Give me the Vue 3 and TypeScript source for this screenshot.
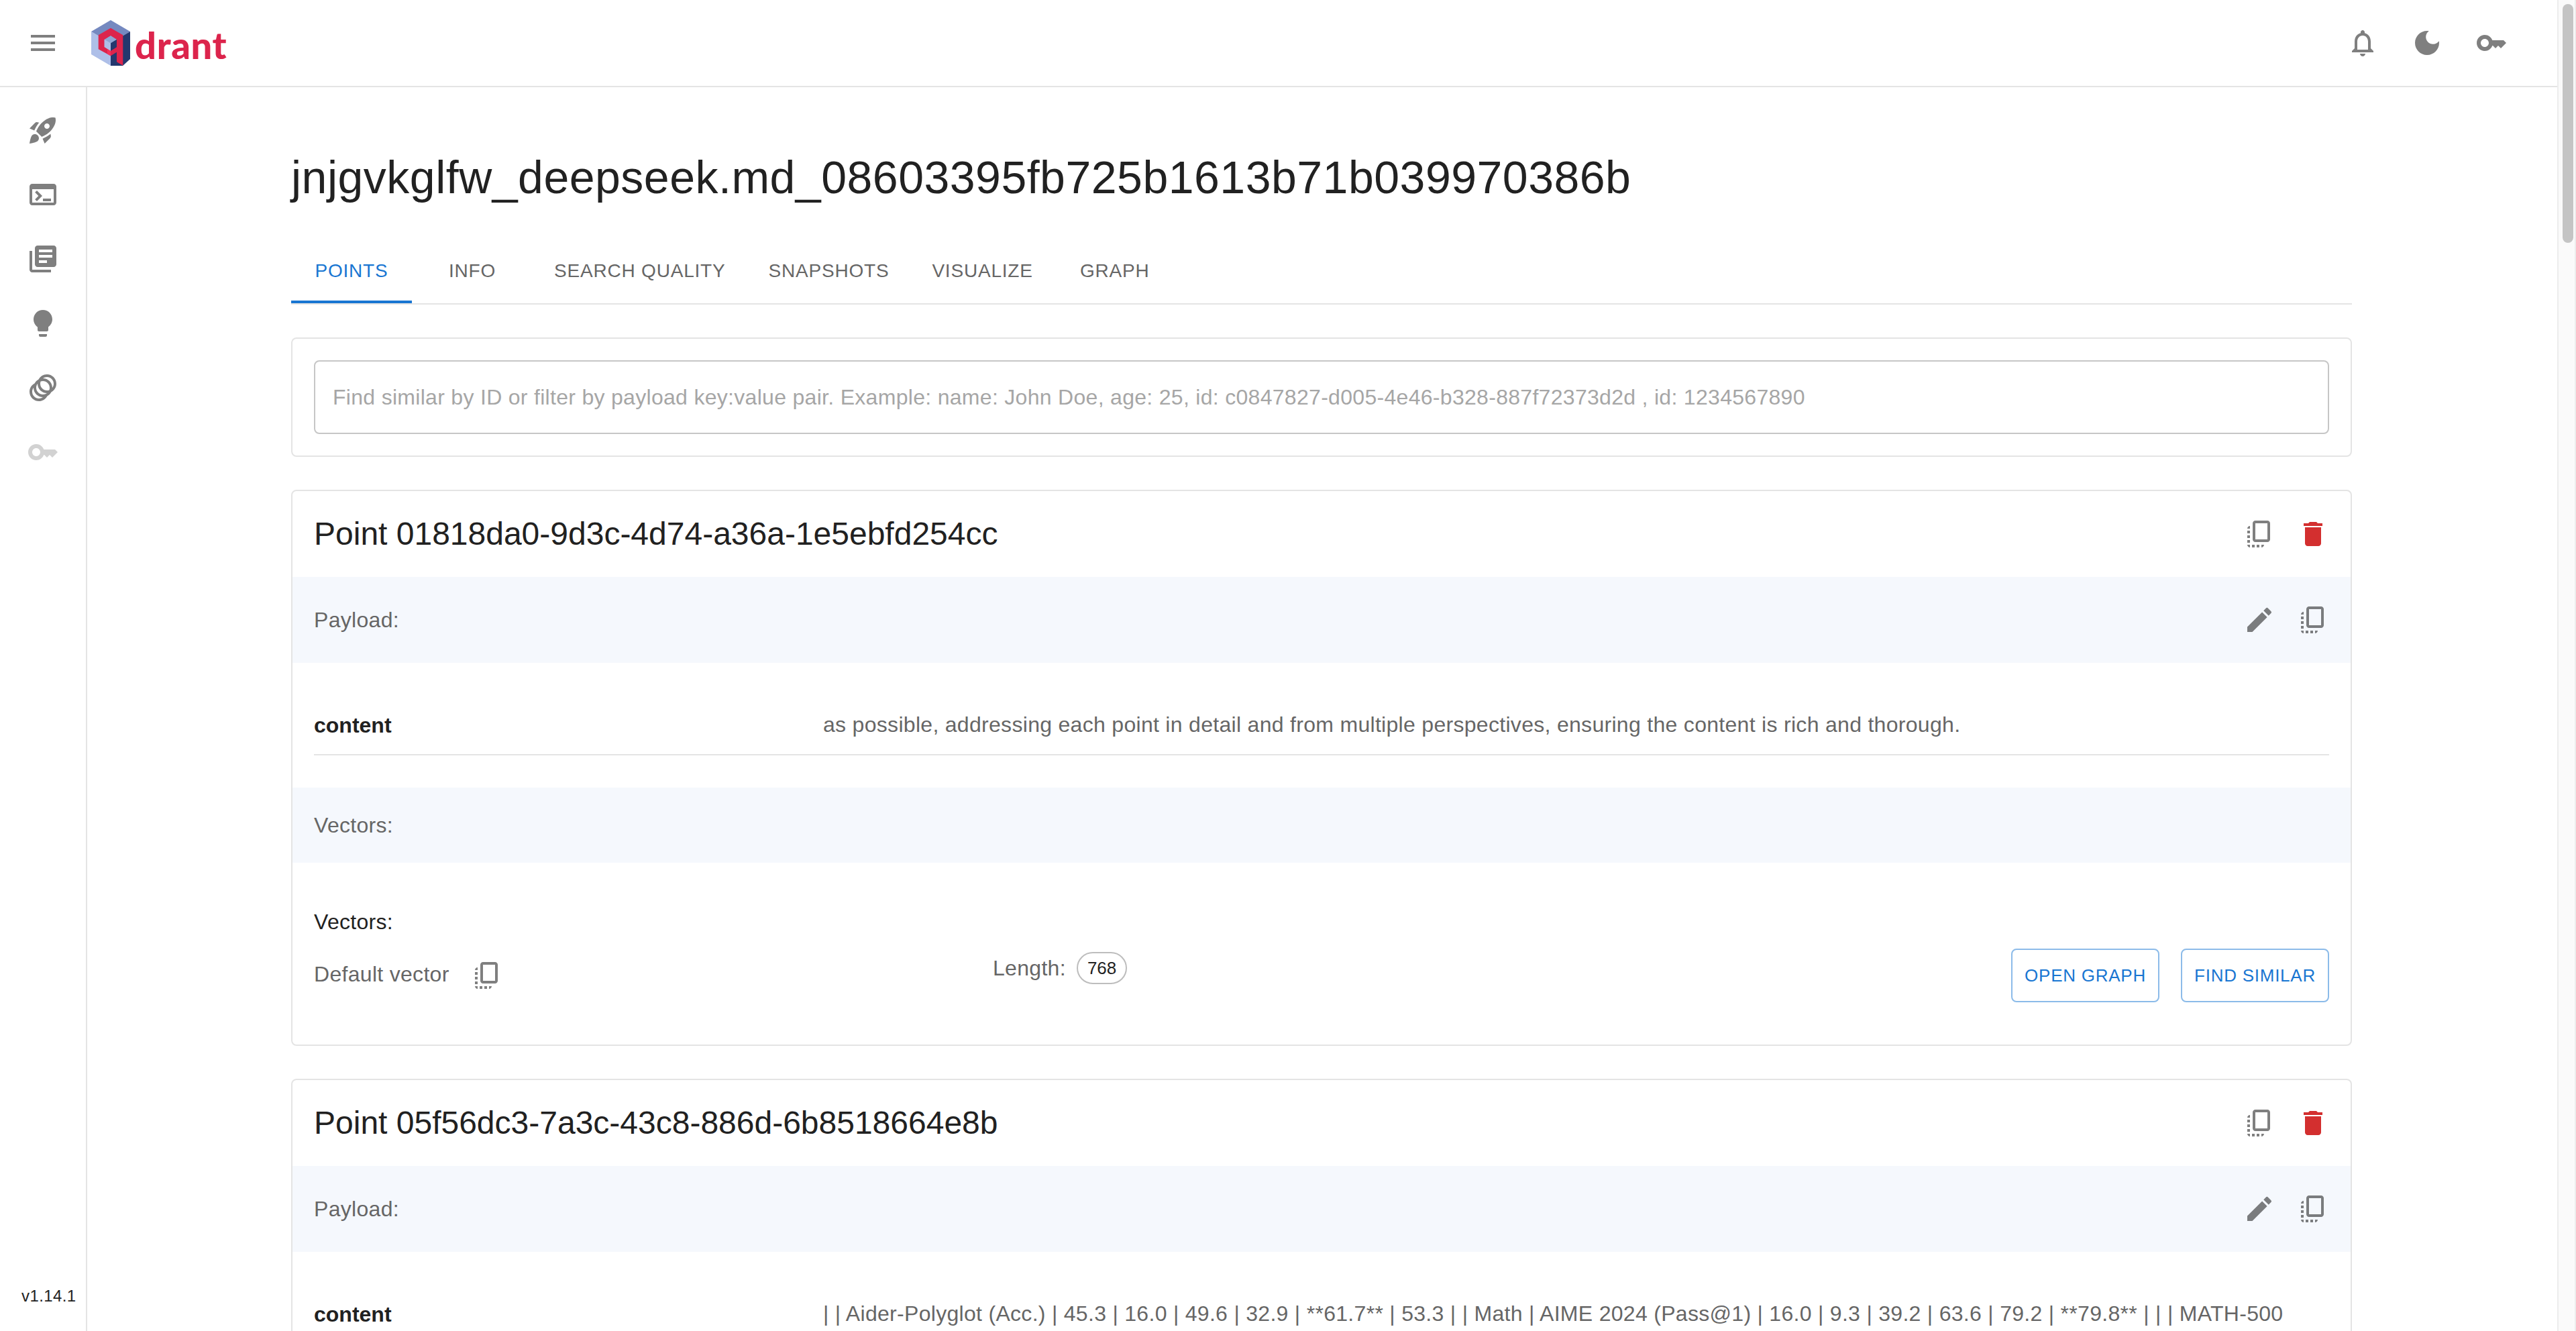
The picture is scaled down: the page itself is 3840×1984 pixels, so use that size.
<script setup lang="ts">
const icons: Record<string, string> = {
  menu: 'M3 18h18v-2H3v2zm0-5h18v-2H3v2zm0-7v2h18V6H3z',
  rocket: 'M9.19 6.35c-2.04 2.29-3.44 5.58-3.57 5.89L2 10.69l4.05-4.05c.47-.47 1.15-.68 1.81-.55l1.33.26zM11.17 17s3.74-1.55 5.89-3.7c5.4-5.4 4.5-9.62 4.21-10.57-.95-.3-5.17-1.19-10.57 4.21C8.55 9.09 7 12.83 7 12.83L11.17 17zm6.48-2.19c-2.29 2.04-5.58 3.44-5.89 3.57L13.31 22l4.05-4.05c.47-.47.68-1.15.55-1.81l-.26-1.33zM9 18c0 .83-.34 1.58-.88 2.12C6.94 21.3 2 22 2 22s.7-4.94 1.88-6.12C4.42 15.34 5.17 15 6 15c1.66 0 3 1.34 3 3zm4-9c0-1.1.9-2 2-2s2 .9 2 2-.9 2-2 2-2-.9-2-2z',
  terminal: 'M20 4H4c-1.1 0-2 .9-2 2v12c0 1.1.9 2 2 2h16c1.1 0 2-.9 2-2V6c0-1.1-.9-2-2-2zm0 14H4V8h16v10zm-2-1h-6v-2h6v2zM7.5 17l-1.41-1.41L8.67 13l-2.59-2.59L7.5 9l4 4-4 4z',
  library: 'M4 6H2v14c0 1.1.9 2 2 2h14v-2H4V6zm16-4H8c-1.1 0-2 .9-2 2v12c0 1.1.9 2 2 2h12c1.1 0 2-.9 2-2V4c0-1.1-.9-2-2-2zm-1 9H9V9h10v2zm-4 4H9v-2h6v2zm4-8H9V5h10v2z',
  bulb: 'M9 21c0 .5.4 1 1 1h4c.6 0 1-.5 1-1v-1H9v1zm3-19C8.1 2 5 5.1 5 9c0 2.4 1.2 4.5 3 5.7V17c0 .5.4 1 1 1h6c.6 0 1-.5 1-1v-2.3c1.8-1.3 3-3.4 3-5.7 0-3.9-3.1-7-7-7z',
  rings: 'M15 2c-2.71 0-5.05 1.54-6.22 3.78-1.28.67-2.34 1.72-3 3C3.54 9.95 2 12.29 2 15c0 3.87 3.13 7 7 7 2.71 0 5.05-1.54 6.22-3.78 1.28-.67 2.34-1.72 3-3C20.46 14.05 22 11.71 22 9c0-3.87-3.13-7-7-7zM9 20c-2.76 0-5-2.24-5-5 0-1.12.37-2.16 1-3 0 3.87 3.13 7 7 7-.84.63-1.88 1-3 1zm3-3c-2.76 0-5-2.24-5-5 0-1.12.37-2.16 1-3 0 3.86 3.13 6.99 7 7-.84.63-1.88 1-3 1zm4.7-3.3c-.53.19-1.1.3-1.7.3-2.76 0-5-2.24-5-5 0-.6.11-1.17.3-1.7.53-.19 1.1-.3 1.7-.3 2.76 0 5 2.24 5 5 0 .6-.11 1.17-.3 1.7zM19 12c0-3.86-3.13-6.99-7-7 .84-.63 1.87-1 3-1 2.76 0 5 2.24 5 5 0 1.12-.37 2.16-1 3z',
  key: 'M21 10h-8.35C11.83 7.67 9.61 6 7 6c-3.31 0-6 2.69-6 6s2.69 6 6 6c2.61 0 4.83-1.67 5.65-4H13l2 2 2-2 2 2 4-4.04L21 10zM7 15c-1.65 0-3-1.35-3-3s1.35-3 3-3 3 1.35 3 3-1.35 3-3 3z',
  bell: 'M12 22c1.1 0 2-.9 2-2h-4c0 1.1.9 2 2 2zm6-6v-5c0-3.07-1.63-5.64-4.5-6.32V4c0-.83-.67-1.5-1.5-1.5s-1.5.67-1.5 1.5v.68C7.64 5.36 6 7.92 6 11v5l-2 2v1h16v-1l-2-2zm-2 1H8v-6c0-2.48 1.51-4.5 4-4.5s4 2.02 4 4.5v6z',
  moon: 'M12 3c-4.97 0-9 4.03-9 9s4.03 9 9 9 9-4.03 9-9c0-.46-.04-.92-.1-1.36-.98 1.37-2.58 2.26-4.4 2.26-2.98 0-5.4-2.42-5.4-5.4 0-1.81.89-3.42 2.26-4.4-.44-.06-.9-.1-1.36-.1z',
  copy: 'M18 2H9c-1.1 0-2 .9-2 2v12c0 1.1.9 2 2 2h9c1.1 0 2-.9 2-2V4c0-1.1-.9-2-2-2zm0 14H9V4h9v12zM3 15v-2h2v2H3zm0-5.5h2v2H3v-2zM10 20h2v2h-2v-2zm-7-1.5v-2h2v2H3zM5 22c-1.1 0-2-.9-2-2h2v2zm3.5 0h-2v-2h2v2zm5 0v-2h2c0 1.1-.9 2-2 2zM5 6v2H3c0-1.1.9-2 2-2z',
  trash: 'M6 19c0 1.1.9 2 2 2h8c1.1 0 2-.9 2-2V7H6v12zM19 4h-3.5l-1-1h-5l-1 1H5v2h14V4z',
  edit: 'M3 17.25V21h3.75L17.81 9.94l-3.75-3.75L3 17.25zM20.71 7.04c.39-.39.39-1.02 0-1.41l-2.34-2.34a.9959.9959 0 0 0-1.41 0l-1.83 1.83 3.75 3.75 1.83-1.83z',
}

const navItems = ['rocket', 'terminal', 'library', 'bulb', 'rings']
const tabs = ['POINTS', 'INFO', 'SEARCH QUALITY', 'SNAPSHOTS', 'VISUALIZE', 'GRAPH']
const points = [
  {
    id: '01818da0-9d3c-4d74-a36a-1e5ebfd254cc',
    content: 'as possible, addressing each point in detail and from multiple perspectives, ensuring the content is rich and thorough.',
    showVectors: true,
  },
  {
    id: '05f56dc3-7a3c-43c8-886d-6b8518664e8b',
    content: '| | Aider-Polyglot (Acc.) | 45.3 | 16.0 | 49.6 | 32.9 | **61.7** | 53.3 | | Math | AIME 2024 (Pass@1) | 16.0 | 9.3 | 39.2 | 63.6 | 79.2 | **79.8** | | | MATH-500',
    showVectors: false,
  },
]
</script>

<template>
  <div class="app">
    <div class="page">
      <header class="topbar">
        <div class="brand">
          <svg class="ic menu" viewBox="0 0 24 24"><path :d="icons.menu" /></svg>
          <div class="logo">
            <svg class="cube" viewBox="0 0 58 68">
              <polygon points="0,17 29,34 29,68 0,51" fill="#aebfe8" />
              <polygon points="0,17 29,0 58,17 29,34" fill="#7589c0" />
              <polygon points="58,17 58,58 47,68 29,68 29,34" fill="#24386e" />
              <path fill="#dc244c" fill-rule="evenodd" d="M29 11.7 47.3 22.3V67.7L38 62.3V47.7L29 53.3 10.7 43.3V22.3ZM29 23.3 19.7 29V40L29 45.7 38 40V29Z" />
              <polygon points="24,43 29,45.7 29,53.3 24,50.6" fill="#f4305a" />
              <polygon points="29,23.3 38,29 29,34.5 19.7,29" fill="#8fa6d4" />
              <polygon points="19.7,29 29,34.5 29,45.7 19.7,40" fill="#aebfe8" />
              <polygon points="38,29 38,40 29,45.7 29,34.5" fill="#24386e" />
            </svg>
            <span class="wordmark">drant</span>
          </div>
        </div>
        <div class="actions">
          <svg v-for="n in ['bell', 'moon', 'key']" :key="n" class="ic" viewBox="0 0 24 24"><path :d="icons[n]" /></svg>
        </div>
      </header>

      <div class="body">
        <aside class="sidebar">
          <div v-for="n in navItems" :key="n" class="nav-item">
            <svg class="ic" viewBox="0 0 24 24"><path :d="icons[n]" /></svg>
          </div>
          <div class="nav-item">
            <svg class="ic disabled" viewBox="0 0 24 24"><path :d="icons.key" /></svg>
          </div>
          <div class="version">v1.14.1</div>
        </aside>

        <main class="main">
          <h1 class="title">jnjgvkglfw_deepseek.md_08603395fb725b1613b71b039970386b</h1>

          <nav class="tabs">
            <div v-for="(t, i) in tabs" :key="t" class="tab" :class="{ active: i === 0 }">{{ t }}</div>
          </nav>

          <section class="card search-card">
            <input class="search" type="text" placeholder="Find similar by ID or filter by payload key:value pair. Example: name: John Doe, age: 25, id: c0847827-d005-4e46-b328-887f72373d2d , id: 1234567890" />
          </section>

          <section v-for="p in points" :key="p.id" class="card point">
            <div class="point-head">
              <h2 class="point-title">Point {{ p.id }}</h2>
              <div class="btns">
                <span class="icon-btn"><svg class="ic" viewBox="0 0 24 24"><path :d="icons.copy" /></svg></span>
                <span class="icon-btn"><svg class="ic red" viewBox="0 0 24 24"><path :d="icons.trash" /></svg></span>
              </div>
            </div>
            <div class="band payload-band">
              <span>Payload:</span>
              <div class="btns">
                <span class="icon-btn"><svg class="ic" viewBox="0 0 24 24"><path :d="icons.edit" /></svg></span>
                <span class="icon-btn"><svg class="ic" viewBox="0 0 24 24"><path :d="icons.copy" /></svg></span>
              </div>
            </div>
            <div class="payload">
              <div class="kv">
                <div class="k">content</div>
                <div class="v">{{ p.content }}</div>
              </div>
            </div>
            <template v-if="p.showVectors">
              <div class="band vectors-band"><span>Vectors:</span></div>
              <div class="vectors">
                <div class="vectors-title">Vectors:</div>
                <div class="vector-row">
                  <div class="vector-name">
                    <span class="vector-label">Default vector</span>
                    <svg class="ic" viewBox="0 0 24 24"><path :d="icons.copy" /></svg>
                  </div>
                  <div class="vector-length">
                    <span>Length:</span>
                    <span class="chip">768</span>
                  </div>
                  <div class="vector-btns">
                    <button class="outlined" type="button">OPEN GRAPH</button>
                    <button class="outlined" type="button">FIND SIMILAR</button>
                  </div>
                </div>
              </div>
            </template>
          </section>
        </main>
      </div>
    </div>

    <div class="scrollbar"><div class="thumb"></div></div>
  </div>
</template>

<style>
html, body { margin: 0; overflow: hidden; background: #fff; }
</style>

<style scoped>
.app {
  display: flex;
  height: 1984px;
  overflow: hidden;
  background: #fff;
  font-family: "Liberation Sans", Arial, sans-serif;
  color: #212121;
}
.page { flex: 1; min-width: 0; display: flex; flex-direction: column; }

.ic { width: 48px; height: 48px; flex: none; display: block; fill: rgba(0, 0, 0, 0.5); }
.ic.red { fill: #d32f2f; }
.ic.disabled { fill: #d2d2d2; }

.topbar {
  flex: none;
  box-sizing: border-box;
  height: 130px;
  border-bottom: 2px solid #e4e4e4;
  display: flex;
  align-items: center;
  justify-content: space-between;
  padding: 0 74px 0 40px;
}
.brand { display: flex; align-items: center; }
.logo { display: flex; align-items: flex-end; margin-left: 48px; }
.cube { width: 58px; height: 68px; display: block; }
.wordmark {
  font-family: Lato, sans-serif;
  font-weight: 900;
  font-size: 56px;
  line-height: 56px;
  letter-spacing: 0.7px;
  color: #dc244c;
  margin-left: 7px;
  margin-bottom: 3px;
}
.actions { display: flex; gap: 48px; }

.body { flex: 1; min-height: 0; display: flex; }
.sidebar {
  flex: none;
  box-sizing: border-box;
  width: 130px;
  border-right: 2px solid #e4e4e4;
  padding-top: 16px;
  display: flex;
  flex-direction: column;
}
.nav-item { height: 96px; display: flex; align-items: center; justify-content: center; }
.version {
  margin-top: auto;
  padding: 0 0 36px 32px;
  font-size: 24px;
  line-height: 32px;
  letter-spacing: 0.4px;
}

.main { flex: 1; min-width: 0; overflow: hidden; padding: 92px 306px 0 304px; }
.title {
  margin: 0 0 50px;
  font-size: 68px;
  font-weight: 400;
  line-height: 84px;
  letter-spacing: 0.5px;
  white-space: nowrap;
}
.tabs { display: flex; border-bottom: 2px solid #e4e4e4; }
.tab {
  box-sizing: border-box;
  min-width: 180px;
  height: 96px;
  padding: 0 32px;
  display: flex;
  align-items: center;
  justify-content: center;
  font-size: 28px;
  letter-spacing: 0.8px;
  color: #666;
}
.tab.active { color: #1976d2; box-shadow: inset 0 -4px 0 #1976d2; }

.card {
  border: 2px solid #e4e4e4;
  border-radius: 8px;
  overflow: hidden;
  margin-top: 49px;
}
.search-card { padding: 32px; }
.search {
  box-sizing: border-box;
  display: block;
  width: 100%;
  height: 110px;
  padding: 0 26px;
  border: 2px solid #c6c6c6;
  border-radius: 8px;
  outline: none;
  background: #fff;
  font-family: inherit;
  font-size: 32px;
  letter-spacing: 0.3px;
}
.search::placeholder { color: #a6a6a6; opacity: 1; }

.point-head {
  height: 128px;
  padding: 0 16px 0 32px;
  display: flex;
  align-items: center;
  justify-content: space-between;
}
.point-title { margin: 0; font-size: 48px; font-weight: 400; line-height: 64px; }
.btns { display: flex; }
.icon-btn { width: 80px; height: 80px; display: flex; align-items: center; justify-content: center; }

.band {
  background: #f5f8fd;
  display: flex;
  align-items: center;
  justify-content: space-between;
  font-size: 32px;
  letter-spacing: 0.3px;
  color: #666;
}
.payload-band { height: 128px; padding: 0 16px 0 32px; }
.vectors-band { height: 112px; padding: 0 32px; }

.payload { padding: 69px 32px 48px; }
.kv {
  display: grid;
  grid-template-columns: 759px 1fr;
  padding-bottom: 19px;
  border-bottom: 2px solid #e4e4e4;
  font-size: 32px;
  line-height: 48px;
}
.k { font-weight: 700; }
.v { color: #666; letter-spacing: 0.3px; white-space: nowrap; margin-top: -1px; }

.vectors { padding: 64px 32px 63px; font-size: 32px; letter-spacing: 0.3px; }
.vectors-title { line-height: 48px; margin-bottom: 16px; }
.vector-row { display: flex; height: 80px; color: #666; }
.vector-name { width: 1013px; flex: none; display: flex; align-items: center; gap: 32px; }
.vector-label { margin-top: -3px; }
.vector-length { display: flex; align-items: center; gap: 16px; height: 48px; margin-top: 5px; margin-left: -1px; }
.chip {
  box-sizing: border-box;
  height: 48px;
  padding: 0 14px;
  display: flex;
  align-items: center;
  border: 2px solid #bdbdbd;
  border-radius: 24px;
  color: #212121;
  font-size: 26px;
  letter-spacing: 0;
}
.vector-btns { margin-left: auto; display: flex; gap: 32px; }
.outlined {
  box-sizing: border-box;
  height: 80px;
  width: 221px;
  padding: 0;
  border: 2px solid #8cbbe9;
  border-radius: 8px;
  background: #fff;
  color: #1976d2;
  font-family: inherit;
  font-size: 26px;
  letter-spacing: 0.75px;
}

.scrollbar {
  flex: none;
  box-sizing: border-box;
  width: 28px;
  height: 100%;
  padding: 6px 4px 0 6px;
  background: #fafafa;
  border-left: 2px solid #ededed;
  border-right: 2px solid #ededed;
}
.thumb { width: 16px; height: 356px; border-radius: 8px; background: #c4c4c4; }
</style>
